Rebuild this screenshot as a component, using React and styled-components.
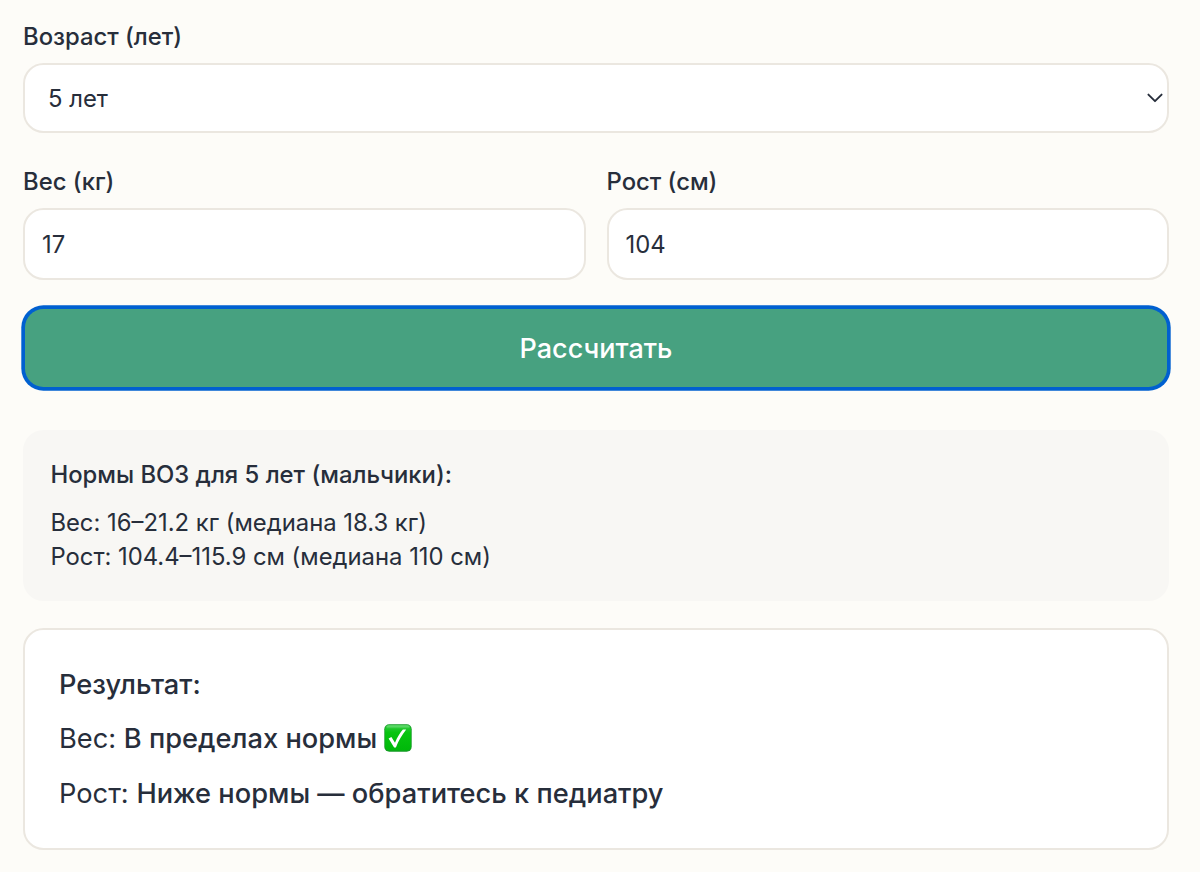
import { useState } from 'react';
import styled, { createGlobalStyle } from 'styled-components';

const App = () => {
  const [age, setAge] = useState('5');
  const [weight, setWeight] = useState('17');
  const [height, setHeight] = useState('104');

  return (
    <>
      <GlobalStyle />
      <Container>
        <Field>
          <Label htmlFor='age'>Возраст (лет)</Label>
          <SelectWrap>
            <Select id='age' value={age} onChange={(e) => setAge(e.target.value)}>
              <option value='5'>5 лет</option>
            </Select>
            <Chevron viewBox='0 0 16 10'>
              <path d='M1.4 1.6 L8 8.2 L14.6 1.6' />
            </Chevron>
          </SelectWrap>
        </Field>
        <Row>
          <Field>
            <Label htmlFor='weight'>Вес (кг)</Label>
            <Input
              id='weight'
              value={weight}
              onChange={(e) => setWeight(e.target.value)}
            />
          </Field>
          <Field>
            <Label htmlFor='height'>Рост (см)</Label>
            <Input
              id='height'
              value={height}
              onChange={(e) => setHeight(e.target.value)}
            />
          </Field>
        </Row>
        <Button type='button'>Рассчитать</Button>
        <Norms>
          <NormsTitle>Нормы ВОЗ для 5 лет (мальчики):</NormsTitle>
          <NormsLine>Вес: 16–21.2 кг (медиана 18.3 кг)</NormsLine>
          <NormsLine>Рост: 104.4–115.9 см (медиана 110 см)</NormsLine>
        </Norms>
        <Result>
          <ResultTitle>Результат:</ResultTitle>
          <ResultLine>
            Вес: <Status>В пределах нормы</Status>
            <CheckMark />
          </ResultLine>
          <ResultLine>
            Рост: <Status>Ниже нормы — обратитесь к педиатру</Status>
          </ResultLine>
        </Result>
      </Container>
    </>
  );
};

const CheckMark = () => (
  <CheckIcon viewBox='0 0 28 28' role='img' aria-label='норма'>
    <defs>
      <linearGradient id='check__fill' x1='0' y1='0' x2='0' y2='1'>
        <stop offset='0' stopColor='#2fc93f' />
        <stop offset='0.3' stopColor='#08c410' />
        <stop offset='1' stopColor='#00b80a' />
      </linearGradient>
      <linearGradient id='check__shine' x1='0' y1='0' x2='0' y2='1'>
        <stop offset='0' stopColor='#6fdc7a' />
        <stop offset='1' stopColor='#2bcb38' />
      </linearGradient>
    </defs>
    <rect x='0.3' y='0.3' width='27.4' height='27.4' rx='5' fill='#149a25' />
    <rect x='1.1' y='1' width='25.8' height='25.6' rx='4.2' fill='url(#check__fill)' />
    <rect x='2.4' y='1.5' width='23.2' height='3' rx='1.5' fill='url(#check__shine)' />
    <path
      d='M4.6 14.6 L7.4 13.1 L11 18.8 C13.2 13.4 15.8 9.2 18.9 5.6 L22.2 5.6 C17.9 11 14.6 16.8 11.9 23.4 L10.1 23.4 Z'
      fill='#fff'
    />
  </CheckIcon>
);

export default App;

const GlobalStyle = createGlobalStyle`
  * {
    box-sizing: border-box;
  }
  body {
    margin: 0;
    background: #fdfcf8;
    color: #272e3b;
    font-family: 'Inter', sans-serif;
  }
`;
const Container = styled.div`
  display: grid;
  align-content: start;
  width: 1200px;
  height: 872px;
  padding: 20px 31px 0 23px;
`;
const Field = styled.div`
  display: flex;
  flex-direction: column;
  flex: 1;
`;
const Label = styled.label`
  margin-bottom: 9px;
  font-size: 23.84px;
  line-height: 34px;
  font-weight: 500;
`;
const SelectWrap = styled.div`
  position: relative;
  display: flex;
`;
const Select = styled.select`
  appearance: none;
  width: 100%;
  height: 70px;
  padding: 0 23px;
  border: 2px solid #ebe7e0;
  border-radius: 20.5px;
  outline: none;
  background: #fff;
  color: inherit;
  font: 400 23.84px 'Inter', sans-serif;
`;
const Chevron = styled.svg`
  position: absolute;
  top: 30px;
  right: 6px;
  width: 16px;
  height: 10px;
  fill: none;
  stroke: #272e3b;
  stroke-width: 1.9;
  stroke-linecap: round;
  stroke-linejoin: round;
  pointer-events: none;
`;
const Row = styled.div`
  display: flex;
  gap: 21px;
  margin: 32px 0 29px;
`;
const Input = styled.input`
  width: 100%;
  height: 72px;
  padding: 0 17px;
  border: 2px solid #ebe7e0;
  border-radius: 20.5px;
  outline: none;
  background: #fff;
  color: inherit;
  font: 400 23.84px 'Inter', sans-serif;
`;
const Button = styled.button`
  height: 78px;
  margin: 0 2px;
  padding: 0;
  border: none;
  border-radius: 18.5px;
  background: #47a180;
  box-shadow: 0 0 0 3.7px #0060d0;
  color: #fff;
  font: 500 27px 'Inter', sans-serif;
  cursor: pointer;
`;
const Norms = styled.div`
  height: 171px;
  margin-top: 43px;
  padding: 28px 27.4px;
  border-radius: 20.5px;
  background: #f8f7f4;
  font-size: 23.84px;
  line-height: 34.1px;
`;
const NormsTitle = styled.div`
  margin-bottom: 13.7px;
  font-weight: 500;
`;
const NormsLine = styled.div`
  font-weight: 400;
`;
const Result = styled.div`
  display: flex;
  flex-direction: column;
  gap: 13.7px;
  height: 222px;
  margin-top: 27px;
  padding: 33.6px 34px;
  border: 2px solid #ebe7e0;
  border-radius: 20.5px;
  background: #fff;
  font-size: 27.25px;
  line-height: 41px;
`;
const ResultTitle = styled.div`
  font-weight: 500;
`;
const ResultLine = styled.div`
  height: 41px;
  white-space: nowrap;
`;
const Status = styled.span`
  font-weight: 500;
`;
const CheckIcon = styled.svg`
  width: 28px;
  height: 28px;
  margin-left: 6.6px;
  vertical-align: -4px;
`;
